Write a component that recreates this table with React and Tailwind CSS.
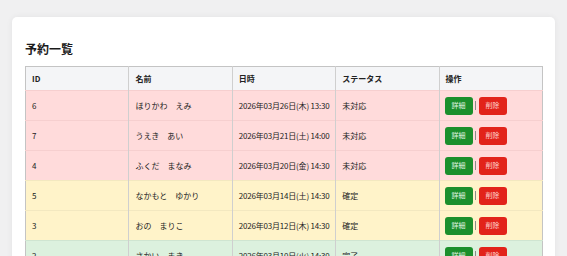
import React from 'react';

const rows = [
  { id: 6, name: 'ほりかわ　えみ', date: '2026年03月26日(木) 13:30', status: '未対応', tone: 'pink' },
  { id: 7, name: 'うえき　あい', date: '2026年03月21日(土) 14:00', status: '未対応', tone: 'pink' },
  { id: 4, name: 'ふくだ　まなみ', date: '2026年03月20日(金) 14:30', status: '未対応', tone: 'pink' },
  { id: 5, name: 'なかもと　ゆかり', date: '2026年03月14日(土) 14:30', status: '確定', tone: 'yellow' },
  { id: 3, name: 'おの　まりこ', date: '2026年03月12日(木) 14:30', status: '確定', tone: 'yellow' },
  { id: 2, name: 'さかい　まき', date: '2026年03月10日(火) 14:30', status: '完了', tone: 'green' },
];

const toneClass = {
  pink: 'bg-[#ffdbdb] border-[#f6cfcf]',
  yellow: 'bg-[#fff3c9] border-[#f3e8c0]',
  green: 'bg-[#dcf1de] border-[#cfe5d1]',
};

const cell = 'px-[6px] border-r border-[#cfcfcf] align-middle whitespace-nowrap';

export default function App() {
  return (
    <div
      className="w-[567px] h-[256px] overflow-hidden bg-[#f0f0f1] pl-[12px] pr-[12px] pt-[17px]"
      style={{ fontFamily: '"Noto Sans CJK JP", "Noto Sans", sans-serif' }}
    >
      <div className="bg-white rounded-[5px] shadow-[0_0_6px_rgba(0,0,0,0.06)] px-[13px] pt-[23px] pb-4 h-[300px]">
        <h1 className="text-[12px] font-bold text-[#1a1a1a] leading-[18px] mb-[8px]">予約一覧</h1>
        <table className="w-[518px] table-fixed border-collapse border border-[#c4c4c4] text-[8px] text-[#222]">
          <thead>
            <tr className="h-[24px] bg-[#f4f5f7] text-left font-bold">
              <th className={cell}>ID</th>
              <th className={cell}>名前</th>
              <th className={cell}>日時</th>
              <th className={cell}>ステータス</th>
              <th className="px-[6px]">操作</th>
            </tr>
          </thead>
          <tbody>
            {rows.map((r) => (
              <tr key={r.id} className={`h-[30px] border-t ${toneClass[r.tone]}`}>
                <td className={cell}>{r.id}</td>
                <td className={cell}>{r.name}</td>
                <td className={`${cell} tracking-[-0.2px]`}>{r.date}</td>
                <td className={cell}>{r.status}</td>
                <td className="pl-[5px]">
                  <div className="flex items-center">
                    <button className="w-[28px] h-[18px] rounded-[3px] bg-[#1b8f2c] text-[7px] text-[#e2f5e4] leading-none">
                      詳細
                    </button>
                    <span className="mx-[2.5px] w-px h-[9px] bg-[#8a8a8a]" />
                    <button className="w-[28px] h-[18px] rounded-[3px] bg-[#e2231a] text-[7px] text-[#ffd6d2] leading-none">
                      削除
                    </button>
                  </div>
                </td>
              </tr>
            ))}
          </tbody>
        </table>
      </div>
    </div>
  );
}
